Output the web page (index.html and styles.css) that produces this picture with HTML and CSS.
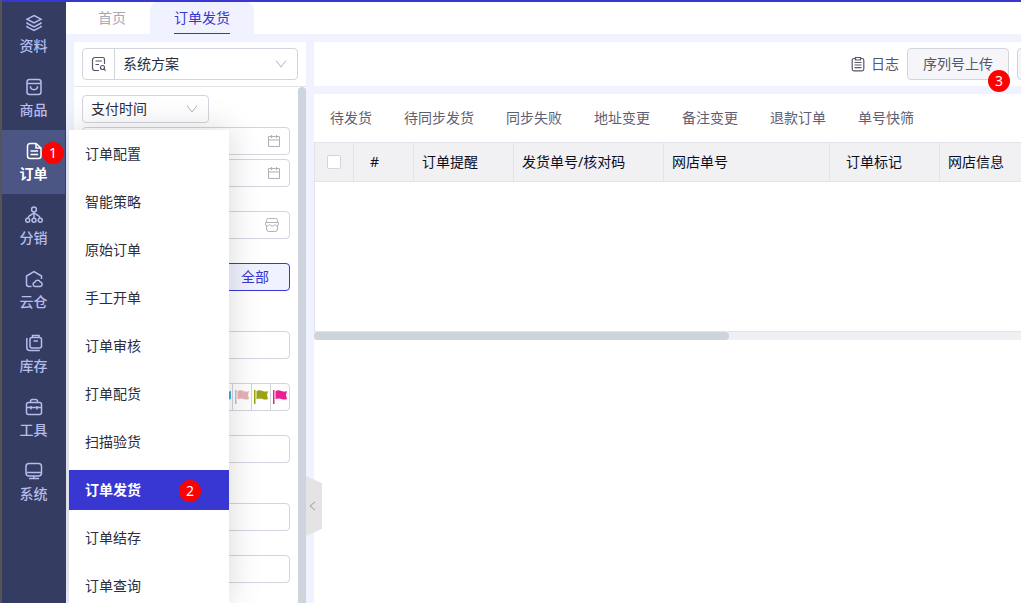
FILE: index.html
```html
<!DOCTYPE html>
<html lang="zh-CN">
<head>
  <meta charset="UTF-8">
  <meta name="viewport" content="width=device-width, initial-scale=1.0">
  <title>订单发货</title>
  <link rel="stylesheet" href="styles.css">
</head>
<body>
  <div class="app">
    <nav class="sidebar">
      <a class="side-item" href="#">
        <svg class="icon" viewBox="0 0 18 18"><path d="M9 1.500l7 3.700-7 3.800-7-3.800zM2 8.200v1l7 3.800 7-3.800v-1M2 11.800v1l7 3.700 7-3.700v-1"/></svg>
        <span>资料</span>
      </a>
      <a class="side-item" href="#">
        <svg class="icon" viewBox="0 0 18 18"><rect x="2" y="1.500" width="14" height="15" rx="2.500"/><path d="M2 5.500h14M5.500 9c.5 3.500 6.500 3.500 7 0M4.800 9h1.500M11.700 9h1.500"/></svg>
        <span>商品</span>
      </a>
      <a class="side-item active" href="#">
        <svg class="icon" viewBox="0 0 18 18"><path d="M11 1.500H5A2.500 2.500 0 0 0 2.500 4v10A2.500 2.500 0 0 0 5 16.500h8.500A2.500 2.500 0 0 0 16 14V6zM11 1.500V6h5M5.500 9h7.500M5.500 12.500h7.500"/></svg>
        <span>订单</span>
        <b class="badge badge-side">1</b>
      </a>
      <a class="side-item" href="#">
        <svg class="icon" viewBox="0 0 18 18"><circle cx="9" cy="3.500" r="2.400"/><circle cx="2.700" cy="14.200" r="2"/><circle cx="9" cy="14.200" r="2"/><circle cx="15.300" cy="14.200" r="2"/><path d="M9 6v6M3 12c0-2.500 3-2.800 6-5 3 2.200 6 2.500 6 5"/></svg>
        <span>分销</span>
      </a>
      <a class="side-item" href="#">
        <svg class="icon" viewBox="0 0 18 18"><path d="M6.500 16.500H4A2.500 2.500 0 0 1 1.500 14V6L9 1.500 16.500 6v3"/><path d="M10 16.500a2.200 2.200 0 0 1-.3-4.300 3 3 0 0 1 5.600-.2 2.300 2.300 0 0 1 0 4.500z"/></svg>
        <span>云仓</span>
      </a>
      <a class="side-item" href="#">
        <svg class="icon" viewBox="0 0 18 18"><rect x="5" y="3.500" width="11.500" height="10.500" rx="2"/><path d="M7.500 3.500v-2H14v2M8.500 7H13M1.800 4v9.500a3 3 0 0 0 3 3h10"/></svg>
        <span>库存</span>
      </a>
      <a class="side-item" href="#">
        <svg class="icon" viewBox="0 0 18 18"><rect x="1.500" y="4.500" width="15" height="12" rx="2"/><path d="M5.500 4.500v-1a2 2 0 0 1 2-2h3a2 2 0 0 1 2 2v1M1.500 9.500h15M6 8v3.500M12 8v3.500"/></svg>
        <span>工具</span>
      </a>
      <a class="side-item" href="#">
        <svg class="icon" viewBox="0 0 18 18"><rect x="1" y="1.500" width="15.500" height="12.500" rx="3"/><path d="M1.500 10.500h14.500M8.800 14v2.500M4 16.500h10"/></svg>
        <span>系统</span>
      </a>
    </nav>

    <div class="main">
      <div class="page-tabs">
        <a class="page-tab" href="#">首页</a>
        <a class="page-tab current" href="#"><span>订单发货</span></a>
      </div>

      <div class="workspace">
        <aside class="filter">
          <div class="scheme">
            <div class="scheme-box">
              <button class="scheme-btn" aria-label="方案">
                <svg class="icon-16" viewBox="0 0 16 16"><path d="M8 14.500H4A2.500 2.500 0 0 1 1.500 12V4A2.500 2.500 0 0 1 4 1.500h7.500a2 2 0 0 1 2 2V8M4.500 5h6.500M4.500 8.500h3.500"/><circle cx="11.500" cy="11.500" r="2"/><path d="M13 13l1.700 1.700"/></svg>
              </button>
              <div class="select-wrap">
                <select aria-label="系统方案"><option>系统方案</option></select>
                <svg class="arrow" viewBox="0 0 12 12"><path d="M1 2.500l5 6.500 5-6.500"/></svg>
              </div>
            </div>
          </div>

          <div class="filter-scroll">
            <form class="fields">
              <div class="field time-type">
                <select aria-label="时间类型"><option>支付时间</option></select>
                <svg class="arrow" viewBox="0 0 12 12"><path d="M1 2.500l5 6.500 5-6.500"/></svg>
              </div>
              <div class="field tight">
                <input type="text" aria-label="开始时间">
                <svg class="suffix" viewBox="0 0 14 14"><path d="M1.500 2.500h11v10h-11zM1.500 6h11M4.500 1v3M9.500 1v3"/></svg>
              </div>
              <div class="field tight">
                <input type="text" aria-label="结束时间">
                <svg class="suffix" viewBox="0 0 14 14"><path d="M1.500 2.500h11v10h-11zM1.500 6h11M4.500 1v3M9.500 1v3"/></svg>
              </div>
              <div class="field">
                <input type="text" aria-label="店铺">
                <svg class="suffix store" viewBox="0 0 16 16"><path d="M4.500 1.500h7a2 2 0 0 1 2 2l1 3.500a2 2 0 0 1-1.500 2q-1.200 0-2-1.500-1 1.500-2.500 1.500T5.500 7.500Q4.500 9 3 9a2 2 0 0 1-1.500-2l1-3.500a2 2 0 0 1 2-2zM2 5.500h12M2.500 9v3a2.500 2.500 0 0 0 2.500 2.500h6a2.500 2.500 0 0 0 2.500-2.500V9"/></svg>
              </div>
              <div class="field"><button type="button" class="all-btn">全部</button></div>
              <div class="field wide-gap"><input type="text" aria-label="订单编号"></div>
              <div class="field flags">
                <button type="button" class="flag blue" aria-label="蓝旗"><svg viewBox="0 0 16 16"><path d="M1 1h1.500v14H1zM3.500 2q3-1.500 6 0 3 1 6.500 0v8q-3.500 1-6.500 0t-6 0z"/></svg></button>
                <button type="button" class="flag rose" aria-label="粉旗"><svg viewBox="0 0 16 16"><path d="M1 1h1.500v14H1zM3.500 2q3-1.500 6 0 3 1 5.500 0l-1 4 1 4q-3 1-5.500 0t-6 0z"/></svg></button>
                <button type="button" class="flag olive" aria-label="绿旗"><svg viewBox="0 0 16 16"><path d="M1 1h1.500v14H1zM3.500 2q3-1.500 6 0 3 1 5.500 0l-1 4 1 4q-3 1-5.500 0t-6 0z"/></svg></button>
                <button type="button" class="flag pink" aria-label="红旗"><svg viewBox="0 0 16 16"><path d="M1 1h1.500v14H1zM3.500 2q3-1.500 6 0 3 1 5.500 0l-1 4 1 4q-3 1-5.500 0t-6 0z"/></svg></button>
              </div>
              <div class="field"><input type="text" aria-label="备注"></div>
              <div class="field wide-gap"><input type="text" aria-label="商品"></div>
              <div class="field"><input type="text" aria-label="规格"></div>
            </form>
            <div class="v-track"></div>
          </div>
          <button class="fold" aria-label="收起"><svg viewBox="0 0 8 10"><path d="M6 1L1 5l5 4"/></svg></button>
        </aside>

        <main class="content">
          <div class="toolbar">
            <a class="log" href="#">
              <svg class="icon-16" viewBox="0 0 16 16"><path d="M5 2.500H4A1.800 1.800 0 0 0 2.200 4.300V13A1.800 1.800 0 0 0 4 14.800h8a1.800 1.800 0 0 0 1.800-1.800V4.300A1.800 1.800 0 0 0 12 2.500h-1M5.500 1.500h5v2.500h-5zM4.500 6.500h7M4.500 9h7M4.500 11.700h7"/></svg>
              日志
            </a>
            <button class="btn">序列号上传<b class="badge badge-btn">3</b></button>
            <button class="btn" aria-label="更多"></button>
          </div>

          <section class="orders">
            <div class="status-tabs">
              <a href="#">待发货</a>
              <a href="#">待同步发货</a>
              <a href="#">同步失败</a>
              <a href="#">地址变更</a>
              <a href="#">备注变更</a>
              <a href="#">退款订单</a>
              <a href="#">单号快筛</a>
            </div>
            <div class="grid">
              <table>
                <colgroup>
                  <col class="w-check"><col class="w-index"><col class="w-notice"><col class="w-ship"><col class="w-shop"><col class="w-mark"><col class="w-info">
                </colgroup>
                <thead>
                  <tr>
                    <th class="check"><input type="checkbox" aria-label="全选"></th>
                    <th class="indent">#</th>
                    <th>订单提醒</th>
                    <th>发货单号/核对码</th>
                    <th>网店单号</th>
                    <th class="indent">订单标记</th>
                    <th>网店信息</th>
                  </tr>
                </thead>
              </table>
            </div>
            <div class="h-track"><div class="h-thumb"></div></div>
          </section>
        </main>
      </div>
    </div>

    <nav class="submenu">
      <a href="#">订单配置</a>
      <a href="#">智能策略</a>
      <a href="#">原始订单</a>
      <a href="#">手工开单</a>
      <a href="#">订单审核</a>
      <a href="#">打单配货</a>
      <a href="#">扫描验货</a>
      <a href="#" class="on">订单发货<b class="badge badge-menu">2</b></a>
      <a href="#">订单结存</a>
      <a href="#">订单查询</a>
    </nav>
  </div>
</body>
</html>
```
FILE: styles.css
```css
:root {
  --primary: #3837d2;
  --page: #f0f2ff;
  --side: #343c61;
  --border: #d3d4de;
  --line: #e3e3eb;
  --thumb: #cdd4dc;
}
* { box-sizing: border-box; }
body {
  margin: 0;
  font-family: "Noto Sans", "Noto Sans CJK SC", sans-serif;
  font-size: 14px;
  line-height: 20px;
  color: #2b2d3d;
  background: var(--page);
}
a { color: inherit; text-decoration: none; }
button, input, select { font: inherit; color: inherit; margin: 0; }
button { padding: 0; cursor: pointer; }
svg { fill: none; stroke: currentColor; flex: none; }

.app {
  position: relative;
  display: flex;
  height: 100vh;
  overflow: hidden;
  border-left: 2px solid #555559;
}
.app::before {
  content: "";
  position: absolute;
  top: 0;
  left: 0;
  right: 0;
  height: 2px;
  background: var(--primary);
}

/* 左侧导航 */
.sidebar { flex: none; width: 64px; padding: 2px 1px 0 0; background: var(--side); color: #b6bcec; }
.side-item {
  position: relative;
  display: flex;
  flex-direction: column;
  align-items: center;
  gap: 4px;
  height: 64px;
  padding-top: 12px;
  font-weight: 500;
}
.side-item.active { background: #4c5684; color: #fff; font-weight: 700; }
.icon { width: 18px; height: 18px; stroke-width: 1.5; }
.icon-16 { width: 16px; height: 16px; stroke-width: 1.2; color: #55576b; }

.badge {
  position: absolute;
  width: 22px;
  height: 22px;
  border-radius: 50%;
  background: #f00;
  color: #fff;
  font-weight: 400;
  line-height: 22px;
  text-align: center;
}
.badge-side { left: 40px; top: 12px; }
.badge-menu { left: 110px; top: 10px; }
.badge-btn { right: -2px; bottom: -13px; }

/* 页签 */
.main { flex: 1; min-width: 0; display: flex; flex-direction: column; padding-top: 2px; }
.page-tabs { flex: none; display: flex; height: 32px; padding-left: 8px; background: #fff; color: #a6a8b8; }
.page-tab { padding: 6px 24px 0; }
.page-tab.current {
  background: var(--page);
  color: var(--primary);
  border-radius: 8px 8px 0 0;
}
.page-tab.current span { display: block; height: 26px; border-bottom: 1px solid var(--primary); }
.workspace { flex: 1; min-height: 0; display: flex; gap: 8px; padding: 8px 0 0 8px; }

/* 查询条件 */
.filter { position: relative; flex: none; width: 232px; display: flex; flex-direction: column; background: #fff; }
.scheme { padding: 6px 8px; border-bottom: 1px solid var(--line); }
.scheme-box { display: flex; height: 32px; border: 1px solid var(--border); border-radius: 4px; }
.scheme-btn { display: flex; align-items: center; justify-content: center; width: 32px; border: 0; border-right: 1px solid var(--border); background: none; }
.select-wrap { position: relative; flex: 1; }
select { width: 100%; height: 100%; padding: 0 8px; border: 0; background: none; appearance: none; }
.arrow { position: absolute; right: 10px; top: 50%; width: 12px; height: 12px; margin-top: -6px; color: #b5b6bd; pointer-events: none; }
.filter-scroll { flex: 1; min-height: 0; display: flex; overflow: hidden; }
.fields { flex: 1; padding: 8px; }
.v-track { width: 8px; background: var(--thumb); border-radius: 4px 4px 0 0; }
.field { position: relative; height: 28px; margin-top: 24px; }
.field.tight { margin-top: 4px; }
.field.wide-gap { margin-top: 40px; }
.field.time-type { width: 127px; margin-top: 0; border: 1px solid var(--border); border-radius: 4px; }
.field input { width: 100%; height: 28px; padding: 0 28px 0 8px; border: 1px solid var(--border); border-radius: 4px; background: #fff; }
.suffix { position: absolute; right: 9px; top: 7px; width: 14px; height: 14px; color: #b0b1b8; }
.suffix.store { right: 10px; top: 6px; width: 16px; height: 16px; }
.all-btn { display: block; width: 70px; height: 28px; margin-left: auto; border: 1px solid var(--primary); border-radius: 0 4px 4px 0; background: var(--page); color: var(--primary); }
.flags { display: flex; justify-content: flex-end; border: 1px solid var(--border); border-radius: 4px; }
.flag { display: flex; align-items: center; justify-content: center; width: 19px; border: 0; border-left: 1px solid var(--border); background: none; }
.flag svg { width: 16px; height: 16px; fill: currentColor; stroke: none; }
.flag.blue { color: #35b3ea; }
.flag.rose { color: #e5b3b5; }
.flag.olive { color: #9ba312; }
.flag.pink { color: #ea1f92; }
.fold {
  position: absolute;
  left: 100%;
  top: 434px;
  z-index: 1;
  width: 16px;
  height: 60px;
  padding-right: 2px;
  border: 0;
  background: #e4e4e4;
  color: #999;
  clip-path: polygon(0 0, 100% 12%, 100% 88%, 0 100%);
}
.fold svg { width: 8px; height: 10px; }

/* 订单列表 */
.content { flex: 1; min-width: 0; display: flex; flex-direction: column; gap: 8px; }
.toolbar {
  flex: none;
  display: flex;
  align-items: center;
  justify-content: flex-end;
  gap: 8px;
  height: 44px;
  margin-right: -98px;
  background: #fff;
  color: #55576b;
}
.log { display: flex; align-items: center; gap: 5px; }
.btn { position: relative; min-width: 102px; height: 32px; border: 1px solid var(--border); border-radius: 4px; background: #f6f6fa; }
.orders { flex: 1; background: #fff; overflow: hidden; }
.status-tabs { display: flex; gap: 32px; height: 48px; padding: 14px 16px; color: #5e6072; white-space: nowrap; }
.grid { height: 190px; border: 1px solid var(--line); border-right: 0; overflow: hidden; }
table { width: 786px; table-layout: fixed; border-collapse: separate; border-spacing: 0; }
th {
  height: 39px;
  padding: 0 8px;
  border-right: 1px solid var(--line);
  border-bottom: 1px solid var(--line);
  background: #f1f1f4;
  color: #0c0e20;
  font-weight: 400;
  text-align: left;
}
th.indent { padding-left: 16px; }
th.check { padding: 0 12px; }
.check input { display: block; width: 14px; height: 14px; appearance: none; border: 1px solid var(--border); border-radius: 2px; background: #fff; }
.w-check { width: 39px; }
.w-index { width: 60px; }
.w-notice { width: 100px; }
.w-ship { width: 150px; }
.w-shop { width: 166px; }
.w-mark { width: 110px; }
.w-info { width: 161px; }
.h-track { height: 8px; background: #efeff4; }
.h-thumb { width: 415px; height: 8px; border-radius: 4px; background: var(--thumb); }

/* 订单子菜单 */
.submenu {
  position: absolute;
  left: 67px;
  top: 130px;
  bottom: 0;
  z-index: 2;
  width: 160px;
  padding-top: 4px;
  overflow: hidden;
  background: #fff;
  box-shadow: 0 0 32px rgba(0, 0, 0, 0.16);
  clip-path: inset(-40px -40px 0 -3px);
}
.submenu a { position: relative; display: block; height: 40px; margin-bottom: 8px; padding: 10px 16px; }
.submenu a.on { background: var(--primary); color: #fff; font-weight: 700; }
```
